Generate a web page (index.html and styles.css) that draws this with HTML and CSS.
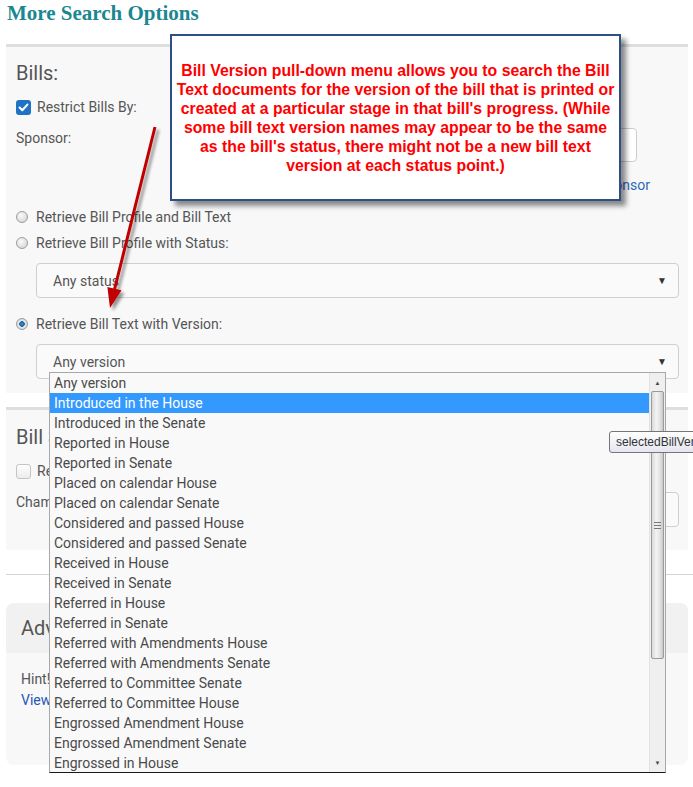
FILE: index.html
```html
<!DOCTYPE html>
<html lang="en">

<head>
  <meta charset="UTF-8">
  <meta name="viewport" content="width=device-width, initial-scale=1.0">
  <title>More Search Options</title>
  <link rel="stylesheet" href="styles.css">
</head>

<body>
  <div class="mso-page">
    <h1 class="mso-title">More Search Options</h1>

    <!-- Bills panel -->
    <section class="mso-panel mso-panel-bills">
      <h2 class="mso-heading">Bills:</h2>
      <div class="mso-check-row">
        <span class="mso-box mso-box-on">
          <svg width="15" height="15" viewBox="0 0 15 15"><rect x="0" y="0" width="15" height="15" rx="3" fill="#1f72c4"/><path d="M3.6 7.6 L6.3 10.2 L11.4 4.6" fill="none" stroke="#fff" stroke-width="2.1" stroke-linecap="round" stroke-linejoin="round"/></svg>
        </span>
        Restrict Bills By:
      </div>
      <div class="mso-sponsor-row">
        <span class="mso-field-label">Sponsor:</span>
        <div class="mso-input"></div>
      </div>
      <div class="mso-link-row"><a class="mso-link">Add Sponsor</a></div>
      <div class="mso-radio-row mso-first-radio"><span class="mso-radio"></span>Retrieve Bill Profile and Bill Text</div>
      <div class="mso-radio-row"><span class="mso-radio"></span>Retrieve Bill Profile with Status:</div>
      <div class="mso-select">Any status<span class="mso-caret">&#9660;</span></div>
      <div class="mso-radio-row mso-third-radio"><span class="mso-radio mso-radio-on"></span>Retrieve Bill Text with Version:</div>
      <div class="mso-select">Any version<span class="mso-caret">&#9660;</span></div>
    </section>

    <!-- Bill status panel -->
    <section class="mso-panel mso-panel-status">
      <h2 class="mso-heading">Bill Status:</h2>
      <div class="mso-check-row">
        <span class="mso-box"></span>
        Restrict Bill Status By:
      </div>
      <div class="mso-chamber-row">
        <span class="mso-field-label">Chamber:</span>
        <div class="mso-select mso-select-small">Any chamber<span class="mso-caret mso-caret-blue">&#9660;</span></div>
      </div>
    </section>

    <hr class="mso-rule">

    <!-- Advanced panel -->
    <section class="mso-adv">
      <div class="mso-adv-head">Advanced Options</div>
      <div class="mso-adv-body">
        <div class="mso-line">Hint! Use quotes to search for an exact phrase.</div>
        <div class="mso-line"><a class="mso-link">View search tips</a></div>
      </div>
    </section>
  </div>

  <!-- open pull-down list -->
  <div class="mso-dropdown">
    <ul class="mso-options">
      <li>Any version</li>
      <li class="mso-selected">Introduced in the House</li>
      <li>Introduced in the Senate</li>
      <li>Reported in House</li>
      <li>Reported in Senate</li>
      <li>Placed on calendar House</li>
      <li>Placed on calendar Senate</li>
      <li>Considered and passed House</li>
      <li>Considered and passed Senate</li>
      <li>Received in House</li>
      <li>Received in Senate</li>
      <li>Referred in House</li>
      <li>Referred in Senate</li>
      <li>Referred with Amendments House</li>
      <li>Referred with Amendments Senate</li>
      <li>Referred to Committee Senate</li>
      <li>Referred to Committee House</li>
      <li>Engrossed Amendment House</li>
      <li>Engrossed Amendment Senate</li>
      <li>Engrossed in House</li>
    </ul>
    <div class="mso-scrollbar">
      <div class="mso-sb-btn">&#9650;</div>
      <div class="mso-sb-thumb"><span class="mso-grip"></span></div>
      <div class="mso-sb-btn mso-sb-down">&#9660;</div>
    </div>
  </div>

  <div class="mso-tooltip">selectedBillVersion</div>

  <svg class="mso-arrow" width="693" height="787" viewBox="0 0 693 787">
    <defs>
      <filter id="arrowShadow" x="-50%" y="-10%" width="200%" height="120%">
        <feDropShadow dx="3" dy="3" stdDeviation="1.8" flood-color="#000" flood-opacity="0.4"/>
      </filter>
    </defs>
    <g filter="url(#arrowShadow)">
      <line x1="155" y1="127" x2="114.6" y2="289" stroke="#c00000" stroke-width="3"/>
      <polygon points="110,308 121.5,290.2 107.4,286.9" fill="#c00000"/>
    </g>
  </svg>

  <div class="mso-callout">
    <p>Bill Version pull-down menu allows you to search the Bill<br>
      Text documents for the version of the bill that is printed or<br>
      created at a particular stage in that bill's progress. (While<br>
      some bill text version names may appear to be the same<br>
      as the bill's status, there might not be a new bill text<br>
      version at each status point.)</p>
  </div>
</body>

</html>
```

FILE: styles.css
```css
body {
  margin: 0;
  padding: 0;
  background: #fff;
  font-family: Roboto, 'Liberation Sans', sans-serif;
  font-size: 14px;
  color: #555;
}

.mso-page {
  width: 693px;
  position: relative;
}

/* Sidetittel */
.mso-title {
  margin: 0;
  padding-left: 7px;
  font-family: 'Liberation Serif', serif;
  font-size: 21px;
  font-weight: 700;
  line-height: 26px;
  color: #1b8790;
}

.mso-panel {
  margin-left: 6px;
  width: 663px;
  padding: 14px 9px 14px 10px;
  background: #f8f8f8;
  border-top: 3px solid #dedede;
}

.mso-panel-bills {
  margin-top: 18px;
}

.mso-panel-status {
  margin-top: 14px;
  padding-top: 15px;
  padding-bottom: 23px;
}

.mso-heading {
  margin: 0;
  font-size: 20px;
  font-weight: 400;
  line-height: 24px;
  color: #555;
}

.mso-check-row {
  display: flex;
  align-items: center;
  height: 20px;
  margin-top: 12px;
}

.mso-box {
  width: 15px;
  height: 15px;
  margin-right: 6px;
  box-sizing: border-box;
  border: 1px solid #c4c4c4;
  border-radius: 3px;
  background: linear-gradient(#fdfdfd, #ececec);
}

.mso-box-on {
  border: none;
  background: none;
}

.mso-box svg {
  display: block;
}

.mso-sponsor-row,
.mso-chamber-row {
  display: flex;
  align-items: flex-start;
  margin-top: 11px;
}

.mso-field-label {
  line-height: 20px;
}

.mso-input {
  margin-left: auto;
  margin-right: 42px;
  width: 437px;
  height: 34px;
  box-sizing: border-box;
  background: #fff;
  border: 1px solid #ccc;
  border-radius: 4px;
}

.mso-link-row {
  display: flex;
  justify-content: flex-end;
  margin-top: 13px;
  padding-right: 29px;
  line-height: 20px;
}

.mso-link {
  color: #2a6ab8;
  text-decoration: none;
}

.mso-radio-row {
  display: flex;
  align-items: center;
  height: 20px;
  margin-top: 6px;
}

.mso-first-radio {
  margin-top: 12px;
}

.mso-third-radio {
  margin-top: 16px;
}

.mso-radio {
  width: 12px;
  height: 12px;
  margin-right: 8px;
  box-sizing: border-box;
  border: 1px solid #9c9c9c;
  border-radius: 50%;
  background: radial-gradient(circle at 40% 35%, #fafafa, #cfcfcf);
}

.mso-radio-on {
  background: radial-gradient(circle, #3f9be0 0, #0d5aa0 2.5px, #e8e8e8 3px, #cfcfcf 100%);
}

.mso-select {
  display: flex;
  align-items: center;
  margin: 10px 0 0 20px;
  height: 35px;
  box-sizing: border-box;
  padding: 0 11px 0 16px;
  background: #fafafa;
  border: 1px solid #cfcfcf;
  border-radius: 4px;
  color: #555;
}

.mso-select-small {
  margin: 0 0 0 auto;
  width: 549px;
}

.mso-caret {
  margin-left: auto;
  font-size: 10px;
  color: #333;
}

.mso-caret-blue {
  color: #2b5f9e;
}

.mso-rule {
  margin: 24px 0 0 6px;
  border: none;
  border-top: 1px solid #d4d4d4;
  height: 0;
}

/* Avansert */
.mso-adv {
  margin: 28px 0 0 6px;
  width: 682px;
  height: 162px;
  background: #f8f8f8;
  border-radius: 8px;
  overflow: hidden;
}

.mso-adv-head {
  height: 50px;
  padding-left: 15px;
  display: flex;
  align-items: center;
  background: #f1f1f1;
  font-size: 20px;
  color: #555;
}

.mso-adv-body {
  padding: 16px 15px 0;
}

.mso-line {
  line-height: 21px;
}

.mso-line .mso-link {
  color: #2456b8;
}

/* Nedtrekksliste */
.mso-dropdown {
  position: absolute;
  left: 49px;
  top: 372px;
  width: 617px;
  height: 401px;
  box-sizing: border-box;
  background: #f9f9f9;
  border: 1px solid #a8a8a8;
  border-bottom-color: #1a1a1a;
  display: flex;
}

.mso-options {
  list-style: none;
  margin: 0;
  padding: 0;
  flex: 1;
}

.mso-options li {
  height: 20px;
  line-height: 20px;
  padding-left: 4px;
  font-size: 14px;
  color: #4a4a4a;
  white-space: nowrap;
}

.mso-options .mso-selected {
  background: #3399ff;
  color: #fff;
}

.mso-scrollbar {
  width: 15px;
  display: flex;
  flex-direction: column;
  background: #efefef;
  border-left: 1px solid #e2e2e2;
}

.mso-sb-btn {
  height: 18px;
  font-size: 6px;
  color: #444;
  display: flex;
  align-items: center;
  justify-content: center;
}

.mso-sb-down {
  margin-top: auto;
  height: 20px;
}

.mso-sb-thumb {
  height: 266px;
  margin: 0 1px;
  border: 1px solid #9a9a9a;
  border-radius: 2px;
  background: linear-gradient(to right, #d9d9d9, #f3f3f3 40%, #e4e4e4 70%, #c9c9c9);
  display: flex;
  align-items: center;
  justify-content: center;
}

.mso-grip {
  width: 7px;
  height: 5px;
  border-top: 1px solid #777;
  border-bottom: 1px solid #777;
  position: relative;
}

.mso-grip::after {
  content: "";
  position: absolute;
  left: 0;
  right: 0;
  top: 2px;
  border-top: 1px solid #777;
}

.mso-tooltip {
  position: absolute;
  left: 609px;
  top: 431px;
  height: 22px;
  box-sizing: border-box;
  padding: 0 6px;
  line-height: 20px;
  border: 1px solid #767676;
  border-radius: 3px;
  background: linear-gradient(#ffffff, #e4e5f0);
  font-family: 'Liberation Sans', sans-serif;
  font-size: 12px;
  color: #333;
  white-space: nowrap;
}

.mso-arrow {
  position: absolute;
  left: 0;
  top: 0;
  pointer-events: none;
}

/* Forklaringsboks */
.mso-callout {
  position: absolute;
  left: 170px;
  top: 34px;
  width: 451px;
  height: 167px;
  box-sizing: border-box;
  background: #fff;
  border: 2px solid #2d4f85;
  box-shadow: 5px 5px 5px rgba(0, 0, 0, 0.45);
  display: flex;
  align-items: center;
  justify-content: center;
}

.mso-callout p {
  margin: 0;
  font-family: 'Liberation Sans', sans-serif;
  font-size: 15.8px;
  font-weight: 700;
  line-height: 19px;
  text-align: center;
  color: #ff0000;
}
```
